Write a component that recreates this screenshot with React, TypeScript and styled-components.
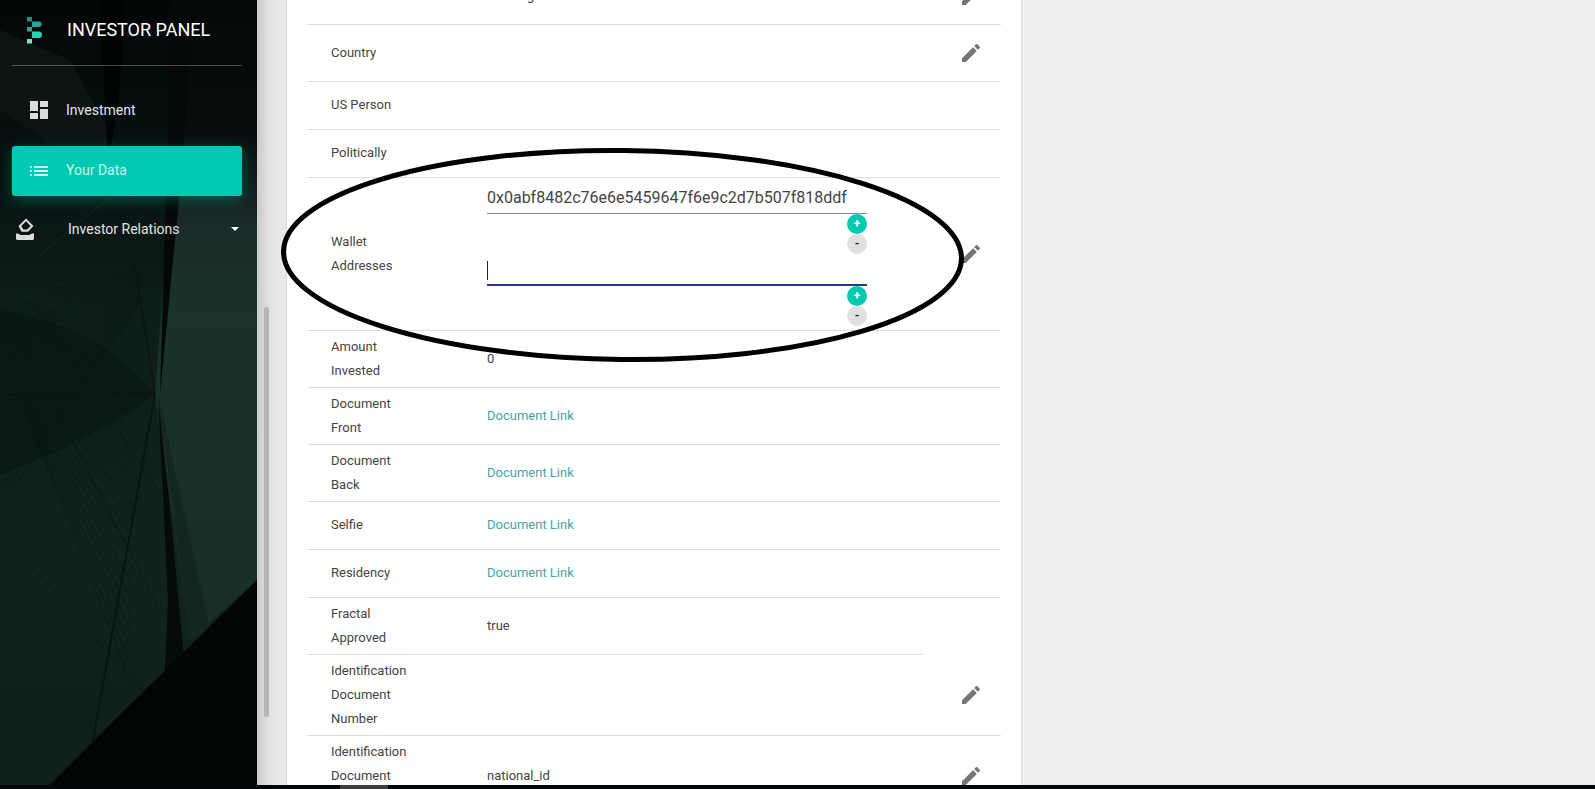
import React from "react";
import styled, { createGlobalStyle } from "styled-components";
import { MdDashboard, MdEdit, MdList } from "react-icons/md";

const Global = createGlobalStyle`
  html, body { margin: 0; height: 100%; overflow: hidden; background: #eeeeee; }
  body { font-family: Roboto, "Liberation Sans", sans-serif; }
  * { box-sizing: border-box; }
`;

const Root = styled.div`
  position: relative;
  height: 100vh;
  display: flex;
  flex-direction: column;
  overflow: hidden;
`;
const Viewport = styled.div`
  flex: 1;
  min-height: 0;
  display: flex;
`;
const Sidebar = styled.aside`
  position: relative;
  flex: 0 0 257px;
  padding: 0 15px 0 12px;
  background: #071010;
  overflow: hidden;
`;
const SidebarArt = styled.svg`
  position: absolute;
  inset: 0;
  width: 100%;
  height: 100%;
`;
const SidebarContent = styled.div`
  position: relative;
`;
const Brand = styled.div`
  display: flex;
  align-items: center;
  height: 66px;
  padding: 0 0 5px 14px;
  gap: 25px;
  border-bottom: 1px solid rgba(255, 255, 255, 0.28);
`;
const BrandTitle = styled.div`
  color: #ffffff;
  font-size: 18px;
  line-height: 24px;
  white-space: nowrap;
`;
const Nav = styled.nav`
  display: flex;
  flex-direction: column;
  gap: 11px;
  padding-top: 19px;
`;
const NavItem = styled.a<{ $active?: boolean }>`
  display: flex;
  align-items: center;
  height: 50px;
  padding-left: 15px;
  gap: 15px;
  border-radius: 3px;
  font-size: 14px;
  color: ${(p) => (p.$active ? "#c6f7ec" : "#e4e4e4")};
  background: ${(p) => (p.$active ? "#00c9b2" : "transparent")};
  box-shadow: ${(p) => (p.$active ? "0 4px 14px rgba(0, 201, 178, 0.32)" : "none")};
  svg { flex: none; color: ${(p) => (p.$active ? "#d6fff6" : "#dcdcdc")}; }
`;
const NavText = styled.span<{ $active?: boolean }>`
  margin-top: ${(p) => (p.$active ? "-2px" : "0")};
`;
const DropdownItem = styled.a`
  display: flex;
  align-items: center;
  height: 50px;
  margin: -3px 0 0 1px;
  font-size: 14px;
  color: #e4e4e4;
  svg { flex: none; color: #dcdcdc; }
`;
const DropdownLabel = styled.span`
  margin-left: 31px;
  flex: 1;
`;
const Caret = styled.span`
  width: 0;
  height: 0;
  margin-right: 3px;
  border-left: 4px solid transparent;
  border-right: 4px solid transparent;
  border-top: 4px solid #ffffff;
`;
const Main = styled.main`
  flex: 1;
  min-width: 0;
  display: flex;
  background: #eeeeee;
  overflow: hidden;
`;
const Gutter = styled.div`
  flex: 0 0 30px;
  padding: 307px 0 0 7px;
  background: linear-gradient(90deg, #c9c9c9 0, #e2e2e2 12px, #ebebeb 100%);
`;
const GutterThumb = styled.div`
  width: 5px;
  height: 410px;
  border-radius: 3px;
  background: #b6b6b6;
`;
const Card = styled.section`
  flex: 0 0 734px;
  align-self: flex-start;
  margin-top: -32px;
  padding: 0 20px;
  background: #ffffff;
  box-shadow: 0 0 2px rgba(0, 0, 0, 0.22);
`;
const Row = styled.div<{ $short?: boolean; $compact?: boolean }>`
  display: flex;
  align-items: center;
  min-height: 48px;
  padding: ${(p) => (p.$compact ? "3px 0 5px" : "4px 0")};
  margin-right: ${(p) => (p.$short ? "78px" : "0")};
  border-bottom: 1px solid #dedede;
  font-size: 13px;
  line-height: 24px;
  color: #444444;
`;
const Label = styled.div`
  flex: 0 0 180px;
  padding: 0 76px 0 24px;
`;
const Value = styled.div`
  white-space: nowrap;
`;
const DocLink = styled.a`
  color: #45a6a0;
`;
const EditButton = styled.button`
  display: flex;
  align-items: center;
  justify-content: center;
  width: 48px;
  height: 48px;
  margin: 0 6px 0 auto;
  padding: 0;
  border: 0;
  background: none;
  color: #757575;
`;
const Wallets = styled.div`
  width: 380px;
`;
const Field = styled.div<{ $focused?: boolean }>`
  display: flex;
  align-items: center;
  height: 32px;
  padding-top: ${(p) => (p.$focused ? "2px" : "0")};
  border-bottom: ${(p) => (p.$focused ? "2px solid #2b3b7f" : "1px solid #8a8a8a")};
  font-size: 16px;
  line-height: 24px;
  color: #444444;
`;
const Cursor = styled.span`
  width: 1px;
  height: 19px;
  background: #222222;
`;
const RoundActions = styled.div`
  display: flex;
  flex-direction: column;
  align-items: flex-end;
`;
const RoundButton = styled.button<{ $add?: boolean }>`
  width: 20px;
  height: 20px;
  padding: 0;
  border: 0;
  border-radius: 50%;
  font: 700 12px/20px Roboto, sans-serif;
  text-align: center;
  color: ${(p) => (p.$add ? "#ffffff" : "#333333")};
  background: ${(p) => (p.$add ? "#00c9b2" : "#e0e0e0")};
`;
const BottomBar = styled.div`
  flex: 0 0 4px;
  padding-left: 340px;
  background: #03070a;
`;
const BottomThumb = styled.div`
  width: 48px;
  height: 100%;
  background: #3c3c3c;
`;
const Annotation = styled.svg`
  position: absolute;
  left: 0;
  top: 0;
  width: 100%;
  height: 100%;
  pointer-events: none;
`;

const Logo = () => (
  <svg width="16" height="28" viewBox="0 0 16 28" style={{ flex: "none" }}>
    <rect x="1" y="1" width="5" height="4.500" fill="#1c8f86" />
    <path d="M6 5.500h6.500q3 0 3 2.700t-3 2.700H6z" fill="#1fa99c" />
    <rect x="1" y="11" width="5" height="4.500" fill="#2fa798" />
    <path d="M6 15.500h6.500q3.500 0 3.500 3.200t-3.500 3.200H6z" fill="#35cdb2" />
    <rect x="1" y="23" width="5" height="4.500" fill="#6fe6c6" />
  </svg>
);

const StampIcon = () => (
  <svg width="24" height="24" viewBox="0 0 24 24" fill="currentColor">
    <path d="M13 1.500 20.500 9 15 14.800H8.500L5.500 9zM13 4.300 8.300 9l2 3.500h3.800L17.700 9z" fillRule="evenodd" />
    <path d="M3 16.500c2.500 0 3.800.6 4.400 1.500h9.200c.6-.9 1.900-1.500 4.400-1.500v5c0 .8-.7 1.500-1.500 1.500h-15C3.700 23 3 22.300 3 21.500z" />
  </svg>
);

const hatchA = Array.from({ length: 22 }, (_, i) => i * 11);
const hatchB = Array.from({ length: 20 }, (_, i) => i * 12);

const Art = () => (
  <SidebarArt viewBox="0 0 257 785" preserveAspectRatio="none">
    <defs>
      <linearGradient id="base" x1="0" y1="0" x2="0" y2="1">
        <stop offset="0" stopColor="#030607" />
        <stop offset="0.2" stopColor="#071110" />
        <stop offset="0.38" stopColor="#0d1d19" />
        <stop offset="0.7" stopColor="#10241e" />
        <stop offset="1" stopColor="#0e1f1b" />
      </linearGradient>
      <linearGradient id="side" gradientUnits="userSpaceOnUse" x1="0" y1="0" x2="0" y2="640">
        <stop offset="0" stopColor="#040808" />
        <stop offset="0.2" stopColor="#070d0d" />
        <stop offset="0.36" stopColor="#1b2c29" />
        <stop offset="0.5" stopColor="#1a332a" />
        <stop offset="1" stopColor="#182e27" />
      </linearGradient>
    </defs>
    <rect width="257" height="785" fill="url(#base)" />
    <path d="M0 30 70 60 168 240 120 190 0 110z" fill="#0b1413" />
    <path d="M185 0H257V580L190 640 155 394z" fill="url(#side)" />
    <path d="M100 0H125L118 110 108 160z" fill="#020404" />
    <path d="M172 0H195L178 210 160 394z" fill="#040808" />
    <path d="M155 394C110 340 60 320 0 310V475C60 450 110 430 155 394z" fill="#08140f" opacity="0.55" />
    <path d="M158 394 172 530 196 785H160L168 600z" fill="#040b0a" />
    <path d="M158 394 210 630 190 640z" fill="#13261f" />
    <g stroke="#081512" strokeWidth="0.7" fill="none">
      {hatchA.map((o) => (
        <line key={o} x1={-10} y1={290 + o} x2={140} y2={270 + o * 0.15} opacity={0.7} />
      ))}
      {hatchB.map((o) => (
        <line key={o} x1={-10 + o * 0.2} y1={300 + o * 0.6} x2={150 - o * 0.1} y2={400 + o * 1.2} opacity={0.7} />
      ))}
      <line x1="0" y1="395" x2="155" y2="394" strokeWidth="1.6" />
      <line x1="155" y1="394" x2="85" y2="785" strokeWidth="2" />
      <line x1="135" y1="265" x2="155" y2="394" strokeWidth="1.5" />
      <line x1="0" y1="530" x2="150" y2="700" />
      <line x1="0" y1="300" x2="165" y2="620" />
      <line x1="30" y1="300" x2="165" y2="500" />
      <line x1="110" y1="250" x2="0" y2="370" />
      <line x1="112" y1="195" x2="40" y2="255" stroke="#1c2a28" />
    </g>
    <path d="M257 580V785H50L130 705z" fill="#020506" />
  </SidebarArt>
);

type Item = { label: string; value?: React.ReactNode; edit?: boolean; short?: boolean; compact?: boolean };

const link = <DocLink>Document Link</DocLink>;

const before: Item[] = [
  { label: "", value: "Reading", edit: true },
  { label: "Country", edit: true },
  { label: "US Person", compact: true },
  { label: "Politically", compact: true },
];
const after: Item[] = [
  { label: "Amount Invested", value: "0" },
  { label: "Document Front", value: link },
  { label: "Document Back", value: link },
  { label: "Selfie", value: link, compact: true },
  { label: "Residency", value: link, compact: true },
  { label: "Fractal Approved", value: "true", short: true },
  { label: "Identification Document Number", edit: true },
  { label: "Identification Document Type", value: "national_id", edit: true },
];

const DataRow = ({ label, value, edit, short, compact }: Item) => (
  <Row $short={short} $compact={compact}>
    <Label>{label}</Label>
    {value != null && <Value>{value}</Value>}
    {edit && (
      <EditButton>
        <MdEdit size={24} />
      </EditButton>
    )}
  </Row>
);

export default function App() {
  return (
    <Root>
      <Global />
      <Viewport>
        <Sidebar>
          <Art />
          <SidebarContent>
            <Brand>
              <Logo />
              <BrandTitle>INVESTOR PANEL</BrandTitle>
            </Brand>
            <Nav>
              <NavItem>
                <MdDashboard size={24} />
                <NavText>Investment</NavText>
              </NavItem>
              <NavItem $active>
                <MdList size={24} />
                <NavText $active>Your Data</NavText>
              </NavItem>
              <DropdownItem>
                <StampIcon />
                <DropdownLabel>Investor Relations</DropdownLabel>
                <Caret />
              </DropdownItem>
            </Nav>
          </SidebarContent>
        </Sidebar>
        <Main>
          <Gutter>
            <GutterThumb />
          </Gutter>
          <Card>
            {before.map((r, i) => (
              <DataRow key={i} {...r} />
            ))}
            <Row>
              <Label>Wallet Addresses</Label>
              <Wallets>
                <Field>0x0abf8482c76e6e5459647f6e9c2d7b507f818ddf</Field>
                <RoundActions>
                  <RoundButton $add>+</RoundButton>
                  <RoundButton>-</RoundButton>
                </RoundActions>
                <Field $focused>
                  <Cursor />
                </Field>
                <RoundActions>
                  <RoundButton $add>+</RoundButton>
                  <RoundButton>-</RoundButton>
                </RoundActions>
              </Wallets>
              <EditButton>
                <MdEdit size={24} />
              </EditButton>
            </Row>
            {after.map((r, i) => (
              <DataRow key={i} {...r} />
            ))}
          </Card>
        </Main>
      </Viewport>
      <BottomBar>
        <BottomThumb />
      </BottomBar>
      <Annotation viewBox="0 0 1595 789">
        <ellipse cx="622.500" cy="255" rx="339" ry="104.500" fill="none" stroke="#000000" strokeWidth="5" transform="rotate(0.6 622.5 255)" />
      </Annotation>
    </Root>
  );
}
